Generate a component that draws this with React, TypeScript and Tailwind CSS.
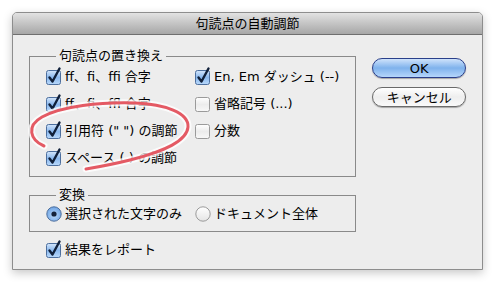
const font = { fontFamily: '"DejaVu Sans", "Noto Sans CJK JP", sans-serif' };

function Check({ on }: { on: boolean }) {
  return (
    <svg width="16" height="16" viewBox="0 0 16 16" className="shrink-0 overflow-visible">
      <defs>
        <linearGradient id="cbOn" x1="0" y1="0" x2="0" y2="1">
          <stop offset="0" stopColor="#d4e6fb" />
          <stop offset="0.5" stopColor="#8ab8ee" />
          <stop offset="1" stopColor="#b9d9fb" />
        </linearGradient>
        <linearGradient id="cbOff" x1="0" y1="0" x2="0" y2="1">
          <stop offset="0" stopColor="#ffffff" />
          <stop offset="0.5" stopColor="#ececec" />
          <stop offset="1" stopColor="#f8f8f8" />
        </linearGradient>
      </defs>
      <rect
        x="0.5"
        y="1.5"
        width="14"
        height="14"
        rx="2"
        fill={on ? "url(#cbOn)" : "url(#cbOff)"}
        stroke={on ? "#4d6f9e" : "#9a9a9a"}
      />
      {on && (
        <path
          d="M3.5 8.5 L6.5 12.5 L13.5 -0.5"
          fill="none"
          stroke="#10203a"
          strokeWidth="2.4"
          strokeLinecap="round"
          strokeLinejoin="round"
        />
      )}
    </svg>
  );
}

function Radio({ on }: { on: boolean }) {
  return (
    <svg width="16" height="16" viewBox="0 0 16 16" className="shrink-0">
      <defs>
        <radialGradient id="rdOn" cx="0.5" cy="0.6" r="0.6">
          <stop offset="0" stopColor="#b9d9fb" />
          <stop offset="1" stopColor="#6ea3e3" />
        </radialGradient>
        <linearGradient id="rdOff" x1="0" y1="0" x2="0" y2="1">
          <stop offset="0" stopColor="#ffffff" />
          <stop offset="1" stopColor="#e4e4e4" />
        </linearGradient>
      </defs>
      <circle cx="8" cy="8" r="7.2" fill={on ? "url(#rdOn)" : "url(#rdOff)"} stroke={on ? "#4d6f9e" : "#9a9a9a"} />
      {on && <circle cx="8" cy="8" r="2.6" fill="#15233a" />}
    </svg>
  );
}

function Item({ on, label, radio }: { on: boolean; label: string; radio?: boolean }) {
  return (
    <div className="flex h-[22px] items-center gap-[3px] text-[13px] text-black">
      {radio ? <Radio on={on} /> : <Check on={on} />}
      <span className="whitespace-nowrap">{label}</span>
    </div>
  );
}

const ring =
  "M44,146 C30,140 26,126 42,117 C62,106 100,102 135,103 C165,104 189,113 188,127 C187,141 165,151 130,160 C110,165 98,167 86,169";

export default function App() {
  return (
    <div className="relative h-[284px] w-[496px] bg-white" style={font}>
      <div className="absolute left-[12px] top-[12px] flex h-[258px] w-[471px] flex-col overflow-hidden rounded-t-[5px] border border-[#8d8d8d] bg-[#ededed] shadow-[0_3px_10px_rgba(0,0,0,0.22)]">
        <div className="flex h-[22px] shrink-0 items-center justify-center border-b border-[#6f6f6f] bg-gradient-to-b from-[#e2e2e2] to-[#a7a7a7] text-[13px] text-black">
          句読点の自動調節
        </div>

        <div className="flex px-[16px]">
          <div className="w-[328px]">
            <fieldset className="mt-[13px] border border-[#8a8a8a] px-[16px] pb-[7px] pt-[2px]">
              <legend className="ml-[10px] px-[3px] text-[13px] leading-[16px]">句読点の置き換え</legend>
              <div className="grid grid-cols-[149px_1fr] gap-y-[5px]">
                <Item on label="ff、fi、ffi 合字" />
                <Item on label="En, Em ダッシュ (--)" />
                <Item on label="ff、fi、ffl 合字" />
                <Item on={false} label="省略記号 (...)" />
                <Item on label={'引用符 (" ") の調節'} />
                <Item on={false} label="分数" />
                <Item on label="スペース ( ) の調節" />
              </div>
            </fieldset>

            <fieldset className="mt-[10px] border border-[#8a8a8a] px-[16px] pb-[6px]">
              <legend className="ml-[10px] px-[3px] text-[13px] leading-[16px]">変換</legend>
              <div className="grid grid-cols-[149px_1fr]">
                <Item radio on label="選択された文字のみ" />
                <Item radio on={false} label="ドキュメント全体" />
              </div>
            </fieldset>

            <div className="ml-[17px] mt-[7px]">
              <Item on label="結果をレポート" />
            </div>
          </div>

          <div className="ml-[16px] flex w-[96px] flex-col gap-[9px] pt-[23px]">
            <button className="h-[20px] rounded-full border border-[#2a3f8a] bg-gradient-to-b from-[#cfe3fb] via-[#7fb2ec] to-[#b5d6fb] text-[13px] leading-none text-black shadow-[0_1px_1px_rgba(0,0,0,0.3)]">
              OK
            </button>
            <button className="h-[20px] rounded-full border border-[#6a6a6a] bg-gradient-to-b from-[#ffffff] via-[#eeeeee] to-[#fafafa] text-[13px] leading-none text-black shadow-[0_1px_1px_rgba(0,0,0,0.3)]">
              キャンセル
            </button>
          </div>
        </div>
      </div>

      <svg className="pointer-events-none absolute left-0 top-0" width="496" height="284" viewBox="0 0 496 284">
        <path d={ring} fill="none" stroke="#ffffff" strokeOpacity="0.75" strokeWidth="7" strokeLinecap="round" />
        <path d={ring} fill="none" stroke="#e45a64" strokeWidth="3" strokeLinecap="round" />
      </svg>
    </div>
  );
}
